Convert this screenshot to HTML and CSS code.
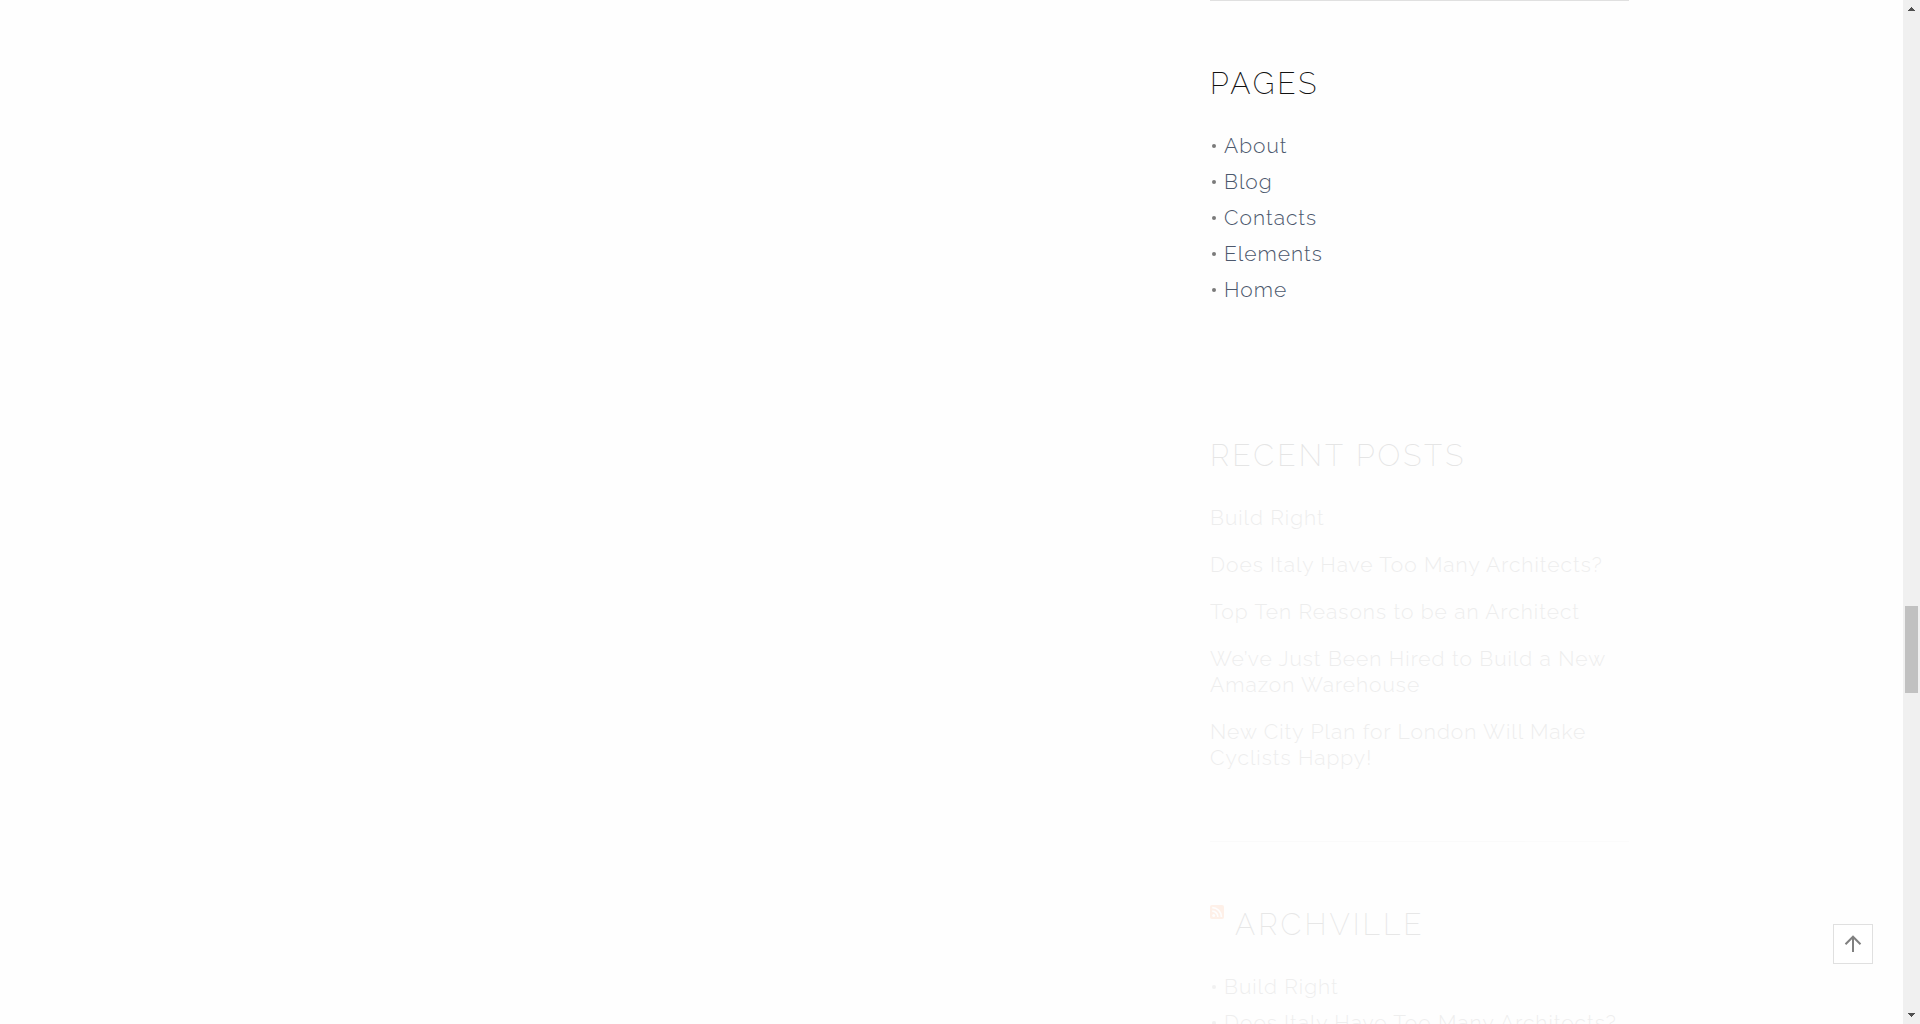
FILE: index.html
```html
<!DOCTYPE html>
<html lang="en">
<head>
<meta charset="utf-8">
<title>Archville Blog</title>
<link rel="stylesheet" href="styles.css">
</head>
<body>
<div class="viewport">
  <div class="page">
    <div class="container">
      <main class="content"></main>
      <aside class="sidebar">
        <section class="widget widget-pages">
          <h2 class="widget-title">Pages</h2>
          <ul class="bullets">
            <li><a href="#about">About</a></li>
            <li><a href="#blog">Blog</a></li>
            <li><a href="#contacts">Contacts</a></li>
            <li><a href="#elements">Elements</a></li>
            <li><a href="#home">Home</a></li>
          </ul>
        </section>
        <section class="widget widget-posts">
          <h2 class="widget-title">Recent Posts</h2>
          <ul class="posts">
            <li><a href="#p1">Build Right</a></li>
            <li><a href="#p2">Does Italy Have Too Many Architects?</a></li>
            <li><a href="#p3">Top Ten Reasons to be an Architect</a></li>
            <li><a href="#p4">We’ve Just Been Hired to Build a New<br>Amazon Warehouse</a></li>
            <li><a href="#p5">New City Plan for London Will Make<br>Cyclists Happy!</a></li>
          </ul>
        </section>
        <section class="widget widget-feed">
          <h2 class="widget-title feed-title">
            <a href="#rss" aria-label="RSS feed"><svg class="rss" viewBox="0 0 14 14" width="14" height="14"><rect width="14" height="14" rx="2" fill="#ff6a1a"/><circle cx="3.7" cy="10.4" r="1.5" fill="#fff"/><path d="M2.2 6.2a5.7 5.7 0 0 1 5.7 5.7M2.2 2.7a9.2 9.2 0 0 1 9.2 9.2" fill="none" stroke="#fff" stroke-width="1.7"/></svg></a>
            <a href="#archville">Archville</a>
          </h2>
          <ul class="bullets">
            <li><a href="#f1">Build Right</a></li>
            <li><a href="#f2">Does Italy Have Too Many Architects?</a></li>
          </ul>
        </section>
      </aside>
    </div>
    <button class="to-top" type="button" aria-label="Back to top"><svg viewBox="0 0 18 18" width="18" height="18"><path d="M9 17V2M1.500 9.200 9 1.700l7.500 7.500" fill="none" stroke="#808080" stroke-width="2"/></svg></button>
  </div>
  <div class="scrollbar" aria-hidden="true">
    <svg class="arrow" viewBox="0 0 7 4" width="7" height="4" shape-rendering="crispEdges"><path d="M3 0h1v1h1v1h1v1h1v1H0V3h1V2h1V1h1z" fill="#505050"/></svg>
    <div class="track"><div class="thumb"></div></div>
    <svg class="arrow" viewBox="0 0 7 4" width="7" height="4" shape-rendering="crispEdges"><path d="M0 0h7v1H6v1H5v1H4v1H3V3H2V2H1V1H0z" fill="#505050"/></svg>
  </div>
</div>
</body>
</html>
```
FILE: styles.css
```css
* {
  box-sizing: border-box;
}

body {
  margin: 0;
  background: #fefefe;
  font-family: Raleway, Lato, "Open Sans", sans-serif;
  font-weight: 300;
  font-size: 21px;
  letter-spacing: 1px;
  color: #7a7a7a;
}

a {
  color: inherit;
  text-decoration: none;
}

ul {
  margin: 0;
  padding: 0;
  list-style: none;
}

.viewport {
  display: flex;
  height: 100vh;
  overflow: hidden;
}

.page {
  flex: 1;
  overflow: hidden;
}

.container {
  display: grid;
  grid-template-columns: 1fr 419px;
  max-width: 1355px;
  margin: 0 auto;
}

.sidebar {
  border-top: 1px solid #e0e0e0;
}

.widget {
  padding: 63px 0 70px;
  border-bottom: 1px solid #dddddd;
}

.widget-pages {
  padding-bottom: 64px;
  border-bottom-color: transparent;
}

.widget-posts {
  opacity: 0.1;
}

.widget-feed {
  opacity: 0.09;
}

.widget-title {
  margin: 0 0 29px;
  font-size: 30px;
  line-height: 40px;
  font-weight: 200;
  letter-spacing: 3px;
  text-transform: uppercase;
  color: #111111;
}

.widget-pages .widget-title,
.widget-feed .widget-title {
  margin-bottom: 24px;
}

.feed-title {
  display: flex;
  gap: 11px;
}

.rss {
  display: block;
}

.bullets li {
  display: flex;
  align-items: center;
  gap: 8px;
  padding-left: 2px;
  line-height: 36px;
}

.bullets li::before {
  content: "";
  width: 4px;
  height: 4px;
  border-radius: 50%;
  background: #7a7a7a;
}

.bullets a {
  color: #4c586d;
}

.widget-feed .bullets a {
  color: #555555;
}

.posts {
  display: grid;
  gap: 21px;
  line-height: 26px;
  color: #666666;
  white-space: nowrap;
}

.to-top {
  position: fixed;
  right: 47px;
  bottom: 60px;
  display: grid;
  place-items: center;
  width: 40px;
  height: 40px;
  padding: 0;
  border: 1px solid #e0e0e0;
  background: #ffffff;
}

.scrollbar {
  display: flex;
  flex-direction: column;
  align-items: center;
  width: 17px;
  padding: 7px 0;
  background: #f0f0f0;
}

.track {
  flex: 1;
  display: grid;
  grid-template-rows: 595fr 87fr 320fr;
}

.thumb {
  grid-row: 2;
  width: 13px;
  background: #c1c1c1;
}
```
